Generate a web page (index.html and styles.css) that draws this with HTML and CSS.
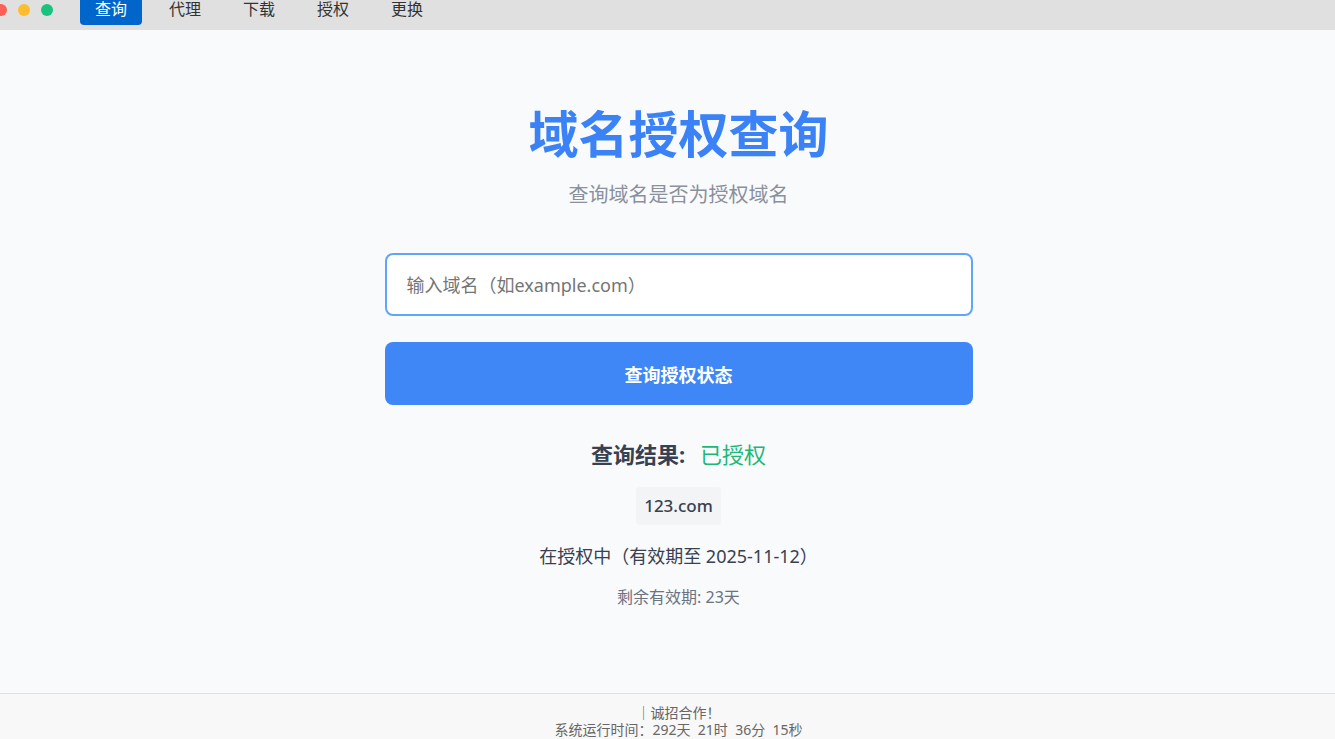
FILE: index.html
```html
<!DOCTYPE html>
<html lang="zh-CN">
<head>
  <meta charset="UTF-8" />
  <meta name="viewport" content="width=device-width, initial-scale=1.0" />
  <title>域名授权查询</title>
  <link rel="stylesheet" href="styles.css">
</head>
<body>
  <header class="titlebar">
    <div class="dots">
      <span class="dot red"></span>
      <span class="dot yellow"></span>
      <span class="dot green"></span>
    </div>
    <nav class="tabs">
      <a class="tab active" href="#query">查询</a>
      <a class="tab" href="#agent">代理</a>
      <a class="tab" href="#download">下载</a>
      <a class="tab" href="#auth">授权</a>
      <a class="tab" href="#change">更换</a>
    </nav>
  </header>

  <main class="content">
    <h1>域名授权查询</h1>
    <p class="subtitle">查询域名是否为授权域名</p>

    <form class="query-form">
      <input class="domain-input" type="text" aria-label="域名" placeholder="输入域名（如example.com）">
      <button class="query-btn" type="submit">查询授权状态</button>
    </form>

    <section class="result">
      <p class="result-title"><strong>查询结果:</strong><span class="status">已授权</span></p>
      <p class="domain">123.com</p>
      <p class="detail">在授权中（有效期至 2025-11-12）</p>
      <p class="remain">剩余有效期: 23天</p>
    </section>
  </main>

  <footer class="footer">
    <p>｜诚招合作！</p>
    <p>系统运行时间：<span class="runtime">292天&nbsp; 21时&nbsp; 36分&nbsp; 15秒</span></p>
  </footer>
</body>
</html>
```

FILE: styles.css
```css
* {
  margin: 0;
  padding: 0;
  box-sizing: border-box;
}

body {
  min-height: 100vh;
  display: flex;
  flex-direction: column;
  background-color: #f9fafc;
  color: #374151;
  font-family: "Noto Sans", "Noto Sans CJK SC", sans-serif;
}

.titlebar {
  display: flex;
  align-items: center;
  height: 30px;
  padding-bottom: 10px;
  background-color: #e0e0e0;
}

.dots {
  display: flex;
  gap: 11px;
  margin-left: -5px;
}

.dot {
  width: 12px;
  height: 12px;
  border-radius: 50%;
}

.red {
  background-color: #ff5f57;
}

.yellow {
  background-color: #ffbd2e;
}

.green {
  background-color: #19c37d;
}

.tabs {
  display: flex;
  gap: 12px;
  margin-left: 27px;
}

.tab {
  padding: 3px 15px 5px;
  border-radius: 4px;
  color: #333;
  font-size: 16px;
  line-height: 22px;
  text-decoration: none;
}

.tab.active {
  background-color: #0066cc;
  color: #fff;
}

.content {
  flex: 1;
  display: flex;
  flex-direction: column;
  align-items: center;
  padding-top: 68px;
  padding-left: 22px;
  text-align: center;
}

h1 {
  color: #3b82f6;
  font-size: 50px;
  line-height: 72px;
  font-weight: 700;
}

.subtitle {
  margin-top: 10px;
  color: #8a909c;
  font-size: 20px;
  line-height: 30px;
}

.query-form {
  display: flex;
  flex-direction: column;
  gap: 26px;
  width: 100%;
  max-width: 588px;
  margin-top: 43px;
}

.domain-input,
.query-btn {
  width: 100%;
  height: 63px;
  border-radius: 8px;
  font-family: inherit;
  font-size: 18px;
}

.domain-input {
  padding: 0 20px;
  border: 2px solid #60a5fa;
  background-color: #fff;
}

.domain-input::placeholder {
  color: #757575;
}

.query-btn {
  border: none;
  background-color: #3f87f7;
  color: #fff;
  font-weight: 700;
  cursor: pointer;
}

.result {
  display: flex;
  flex-direction: column;
  align-items: center;
  margin-top: 32px;
}

.result-title {
  font-size: 22px;
  line-height: 34px;
}

.status {
  margin-left: 15px;
  color: #1db877;
}

.domain {
  margin-top: 16px;
  padding: 4px 8px;
  border-radius: 4px;
  background-color: #f3f4f6;
  font-size: 17px;
  line-height: 30px;
  font-weight: 500;
}

.detail {
  margin-top: 16px;
  font-size: 18px;
  line-height: 30px;
}

.remain {
  margin-top: 14px;
  color: #6b7280;
  font-size: 16px;
  line-height: 24px;
}

.footer {
  height: 46px;
  padding-top: 10px;
  padding-left: 22px;
  border-top: 1px solid #e0e0e0;
  background-color: #f8f8f8;
  color: #666;
  font-size: 14px;
  line-height: 17px;
  text-align: center;
}
```
